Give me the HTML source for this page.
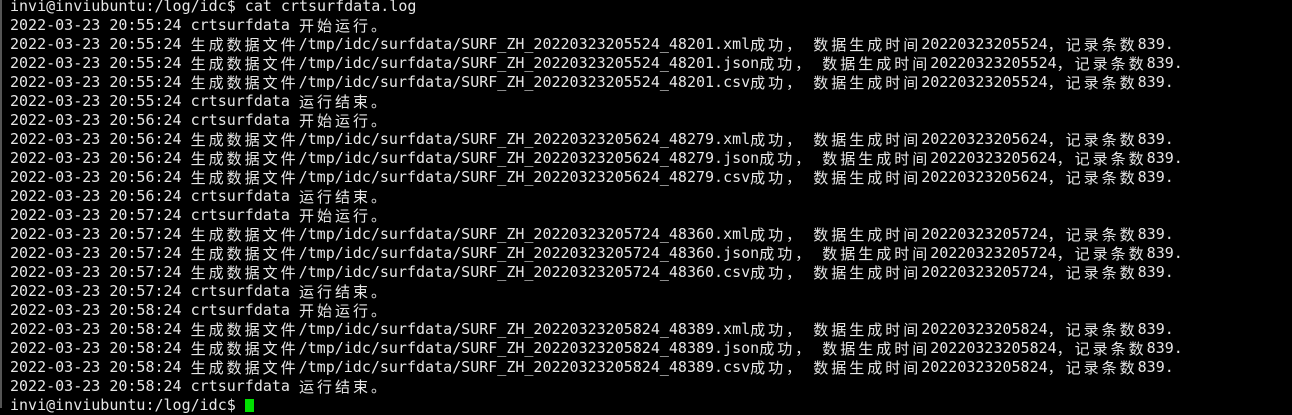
<!DOCTYPE html><html><head><meta charset="utf-8"><style>
html,body{margin:0;padding:0;background:#000;width:1292px;height:408px;overflow:hidden}
body{border-left:2px solid #555;box-sizing:border-box}
pre{margin:0;position:absolute;left:10px;top:-3px;font-family:"DejaVu Sans Mono","Liberation Mono",monospace;font-size:15px;line-height:19px;color:#e6e6e6;white-space:pre}
.l{display:block;height:19px;line-height:19px;overflow:visible}
c{font-family:"Noto Sans CJK SC",sans-serif;display:inline-block;width:18px;height:19px;line-height:19px;vertical-align:top;text-align:left;font-size:15px}
.cur{display:inline-block;width:9px;height:13px;background:#00e000;vertical-align:-2px}
</style></head><body><pre id="t"></pre>
<script>
var L=["invi@inviubuntu:/log/idc$ cat crtsurfdata.log"];
var t=[["20:55:24","20220323205524","48201"],["20:56:24","20220323205624","48279"],["20:57:24","20220323205724","48360"],["20:58:24","20220323205824","48389"]];
t.forEach(function(a){var p="2022-03-23 "+a[0]+" ";
L.push(p+"crtsurfdata 开始运行。");
["xml","json","csv"].forEach(function(e){L.push(p+"生成数据文件/tmp/idc/surfdata/SURF_ZH_"+a[1]+"_"+a[2]+"."+e+"成功， 数据生成时间"+a[1]+"，记录条数839.");});
L.push(p+"crtsurfdata 运行结束。");});
var h=L.map(function(s){return "<span class='l'>"+s.replace(/[^\x00-\x7f]/g,function(ch){return "<c>"+ch+"</c>";})+"</span>";}).join("");
h+="<span class='l'>invi@inviubuntu:/log/idc$ <span class='cur'></span></span>";
document.getElementById("t").innerHTML=h;
</script></body></html>
